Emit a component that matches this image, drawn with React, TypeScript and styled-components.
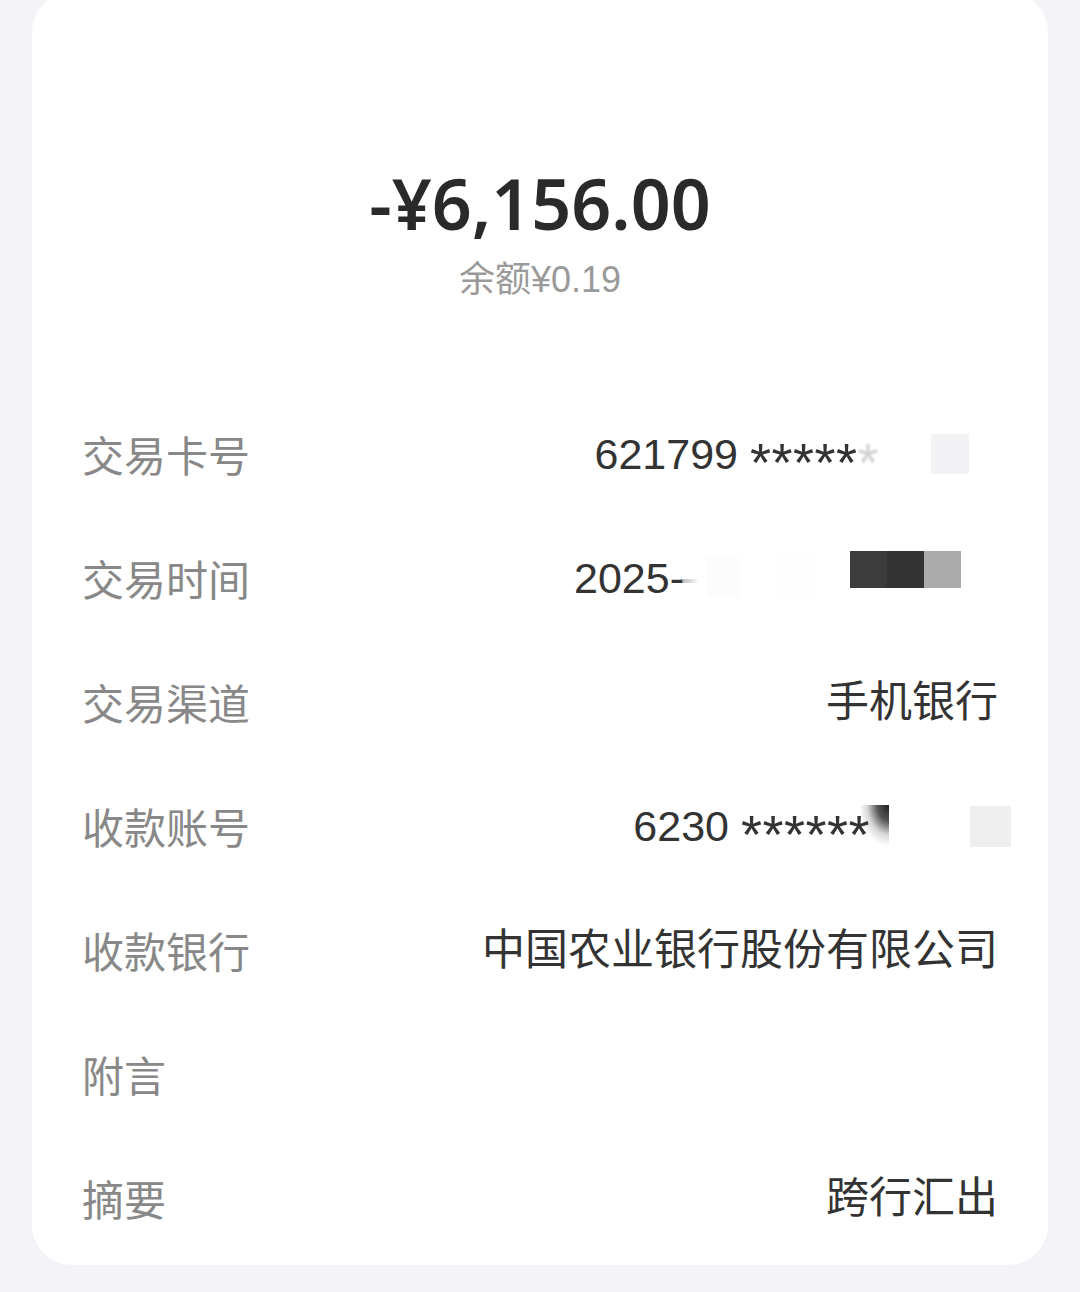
import React from "react";
import styled, { createGlobalStyle } from "styled-components";

const GlobalStyle = createGlobalStyle`
  html, body {
    margin: 0;
    padding: 0;
    background: #f4f4f8;
  }
  body {
    font-family: "Liberation Sans", "Noto Sans CJK SC", sans-serif;
    -webkit-font-smoothing: antialiased;
  }
`;

const Page = styled.div`
  width: 1080px;
  height: 1292px;
  overflow: hidden;
  box-sizing: border-box;
  padding: 0 32px;
  background: #f4f4f8;
`;

const Card = styled.div`
  margin-top: -8px;
  background: #ffffff;
  border-radius: 40px;
  padding: 176px 50px 5px;
  display: flex;
  flex-direction: column;
`;

const Summary = styled.div`
  display: flex;
  flex-direction: column;
  align-items: center;
  gap: 24px;
  margin-bottom: 94px;
`;

const Amount = styled.div`
  font-family: "Noto Sans", "Liberation Sans", sans-serif;
  font-size: 70px;
  line-height: 70px;
  font-weight: 600;
  color: #2a2a2a;
`;

const Balance = styled.div`
  font-family: "Liberation Sans", "Noto Sans CJK SC", sans-serif;
  font-size: 36px;
  line-height: 36px;
  color: #9a9a9a;
`;

const Row = styled.div`
  height: 124px;
  display: flex;
  align-items: center;
  justify-content: space-between;
`;

const Label = styled.div`
  font-family: "Noto Sans CJK SC", sans-serif;
  font-size: 42px;
  line-height: 42px;
  color: #888888;
`;

const Value = styled.div<{ $overhang?: number }>`
  display: flex;
  align-items: center;
  font-family: "Liberation Sans", "Noto Sans CJK SC", sans-serif;
  font-size: 43px;
  line-height: 43px;
  color: #333333;
  white-space: pre;
  margin-right: ${(p) => (p.$overhang ? -p.$overhang : 0)}px;
`;

const Stars = styled.span<{ $faded?: boolean }>`
  font-size: 54px;
  line-height: 43px;
  letter-spacing: 0.5px;
  transform: translateY(8px);
  opacity: ${(p) => (p.$faded ? 0.22 : 1)};
  filter: ${(p) => (p.$faded ? "blur(1px)" : "none")};
`;

const Gap = styled.span<{ $w: number }>`
  display: inline-block;
  width: ${(p) => p.$w}px;
  height: 1px;
`;

const Patch = styled.span<{ $w: number; $h: number; $c: string; $lift?: number }>`
  display: inline-block;
  width: ${(p) => p.$w}px;
  height: ${(p) => p.$h}px;
  background: ${(p) => p.$c};
  margin-bottom: ${(p) => (p.$lift ? p.$lift * 2 : 0)}px;
`;

const FadeTail = styled.span`
  display: inline-block;
  width: 18px;
  height: 4px;
  margin-top: 5px;
  margin-left: -3px;
  background: linear-gradient(to right, rgba(51, 51, 51, 0.35), rgba(255, 255, 255, 0));
`;

const Smudge = styled.span`
  display: inline-block;
  width: 28px;
  height: 42px;
  margin-left: -9px;
  background: radial-gradient(
    ellipse 120% 110% at 100% 0%,
    #1c1c1c 0%,
    rgba(45, 45, 45, 0.8) 35%,
    rgba(130, 130, 130, 0.3) 65%,
    rgba(255, 255, 255, 0) 90%
  );
`;

const Mosaic = styled.span`
  display: inline-flex;
  align-items: center;
`;

export default function App() {
  return (
    <>
      <GlobalStyle />
      <Page>
        <Card>
          <Summary>
            <Amount>-¥6,156.00</Amount>
            <Balance>余额¥0.19</Balance>
          </Summary>

          <Row>
            <Label>交易卡号</Label>
            <Value>
              {"621799 "}
              <Stars>*****</Stars>
              <Stars $faded>*</Stars>
              <Gap $w={52} />
              <Patch $w={38} $h={40} $c="#f3f3f5" />
              <Gap $w={29} />
            </Value>
          </Row>

          <Row>
            <Label>交易时间</Label>
            <Value>
              {"2025-"}
              <Mosaic>
                <FadeTail />
                <Gap $w={7} />
                <Patch $w={35} $h={40} $c="#fcfcfc" />
                <Gap $w={35} />
                <Patch $w={40} $h={40} $c="#fdfdfd" />
                <Gap $w={34} />
                <Patch $w={37} $h={37} $c="#3c3c3c" $lift={8.5} />
                <Patch $w={37} $h={37} $c="#333333" $lift={8.5} />
                <Patch $w={37} $h={37} $c="#ababab" $lift={8.5} />
                <Gap $w={37} />
              </Mosaic>
            </Value>
          </Row>

          <Row>
            <Label>交易渠道</Label>
            <Value>手机银行</Value>
          </Row>

          <Row>
            <Label>收款账号</Label>
            <Value $overhang={13}>
              {"6230 "}
              <Stars>******</Stars>
              <Smudge />
              <Gap $w={81} />
              <Patch $w={41} $h={41} $c="#efefef" />
            </Value>
          </Row>

          <Row>
            <Label>收款银行</Label>
            <Value>中国农业银行股份有限公司</Value>
          </Row>

          <Row>
            <Label>附言</Label>
            <Value />
          </Row>

          <Row>
            <Label>摘要</Label>
            <Value>跨行汇出</Value>
          </Row>
        </Card>
      </Page>
    </>
  );
}
